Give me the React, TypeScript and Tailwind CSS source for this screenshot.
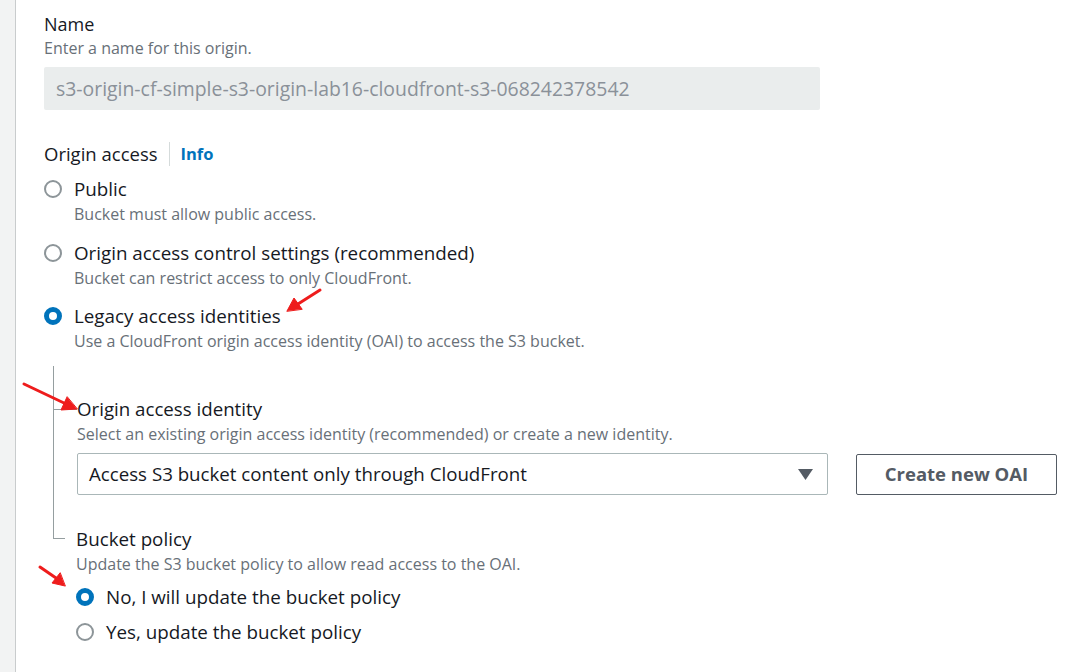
import React from "react";

const font = { fontFamily: '"Open Sans", "Noto Sans", Arial, sans-serif' };

function Radio({ checked }: { checked?: boolean }) {
  return checked ? (
    <span className="inline-block w-[18px] h-[18px] rounded-full border-[5px] border-[#0073bb] bg-white shrink-0" />
  ) : (
    <span className="inline-block w-[18px] h-[18px] rounded-full border-2 border-[#8d9599] bg-white shrink-0" />
  );
}

function RadioOption({
  label,
  desc,
  checked,
}: {
  label: string;
  desc?: string;
  checked?: boolean;
}) {
  return (
    <div>
      <div className="flex items-center h-[24px]">
        <Radio checked={checked} />
        <span className="ml-[12px] text-[18.8px] leading-[24px] text-[#16191f]">{label}</span>
      </div>
      {desc && (
        <div className="ml-[30px] mt-[3px] text-[16px] leading-[20px] text-[#687078]">{desc}</div>
      )}
    </div>
  );
}

export default function App() {
  return (
    <div className="relative w-[1090px] h-[672px] bg-white flex overflow-hidden" style={font}>
      <div className="w-[16px] shrink-0 bg-[#f2f3f3] border-r border-[#c9cccd]" />
      <div className="pl-[28px] pt-[12px] flex-1">
        <div className="text-[18px] leading-[24px] text-[#16191f]">Name</div>
        <div className="mt-[2px] text-[16px] leading-[20px] text-[#687078]">Enter a name for this origin.</div>
        <div className="mt-[9px] w-[776px] h-[43px] rounded-[2px] bg-[#eaeded] flex items-center pl-[12px] text-[19.4px] text-[#8a9199]">
          s3-origin-cf-simple-s3-origin-lab16-cloudfront-s3-068242378542
        </div>

        <div className="mt-[32px] flex items-center h-[24px]">
          <span className="text-[18.5px] leading-[24px] text-[#16191f]">Origin access</span>
          <span className="mx-[11px] w-px h-[24px] bg-[#d5dbdb]" />
          <span className="text-[16.5px] font-bold text-[#0073bb]">Info</span>
        </div>

        <div className="mt-[11px] flex flex-col gap-[16.5px]">
          <RadioOption label="Public" desc="Bucket must allow public access." />
          <RadioOption
            label="Origin access control settings (recommended)"
            desc="Bucket can restrict access to only CloudFront."
          />
          <RadioOption
            checked
            label="Legacy access identities"
            desc="Use a CloudFront origin access identity (OAI) to access the S3 bucket."
          />
        </div>

        <div className="mt-[15px] ml-[9px]">
          <div className="border-l border-[#959ea0] pt-[31px] pb-[32px]">
            <div className="flex items-center h-[24px]">
              <span className="w-[23px] h-px bg-[#959ea0]" />
              <span className="text-[18.7px] leading-[24px] text-[#16191f]">Origin access identity</span>
            </div>
            <div className="pl-[23px]">
              <div className="mt-[3px] text-[16px] leading-[20px] text-[#687078]">
                Select an existing origin access identity (recommended) or create a new identity.
              </div>
              <div className="mt-[9px] flex items-center gap-[28px]">
                <div className="w-[751px] h-[42px] border border-[#aab7b8] rounded-[2px] flex items-center justify-between pl-[11px] pr-[14px]">
                  <span className="text-[18.7px] text-[#16191f]">Access S3 bucket content only through CloudFront</span>
                  <svg width="15" height="11" viewBox="0 0 15 11">
                    <path d="M0 0 H15 L7.5 11 Z" fill="#545b64" />
                  </svg>
                </div>
                <button className="w-[201px] h-[41px] border border-[#545b64] rounded-[2px] text-[18.5px] font-bold text-[#545b64]">
                  Create new OAI
                </button>
              </div>
            </div>
          </div>
          <div className="flex">
            <div className="w-[12px] h-[12px] border-l border-b border-[#959ea0] shrink-0" />
            <div className="ml-[11px]">
              <div className="text-[18.8px] leading-[24px] text-[#16191f]">Bucket policy</div>
              <div className="mt-[3px] text-[16px] leading-[20px] text-[#687078]">
                Update the S3 bucket policy to allow read access to the OAI.
              </div>
              <div className="mt-[11px] flex flex-col gap-[11px]">
                <RadioOption checked label="No, I will update the bucket policy" />
                <RadioOption label="Yes, update the bucket policy" />
              </div>
            </div>
          </div>
        </div>
      </div>

      <svg className="absolute inset-0 pointer-events-none" width="1090" height="672" viewBox="0 0 1090 672">
        <g fill="#ee1c1c" stroke="#ee1c1c" strokeLinecap="round">
          <line x1="320" y1="290" x2="298" y2="304" strokeWidth="3" />
          <path d="M287 311 L294 298 L302 309 Z" strokeWidth="1" />
          <line x1="24" y1="384" x2="64" y2="403" strokeWidth="3" />
          <path d="M77 409 L61 410 L67 397 Z" strokeWidth="1" />
          <line x1="40" y1="567" x2="56" y2="578" strokeWidth="3" />
          <path d="M65 586 L52 583 L60 573 Z" strokeWidth="1" />
        </g>
      </svg>
    </div>
  );
}
